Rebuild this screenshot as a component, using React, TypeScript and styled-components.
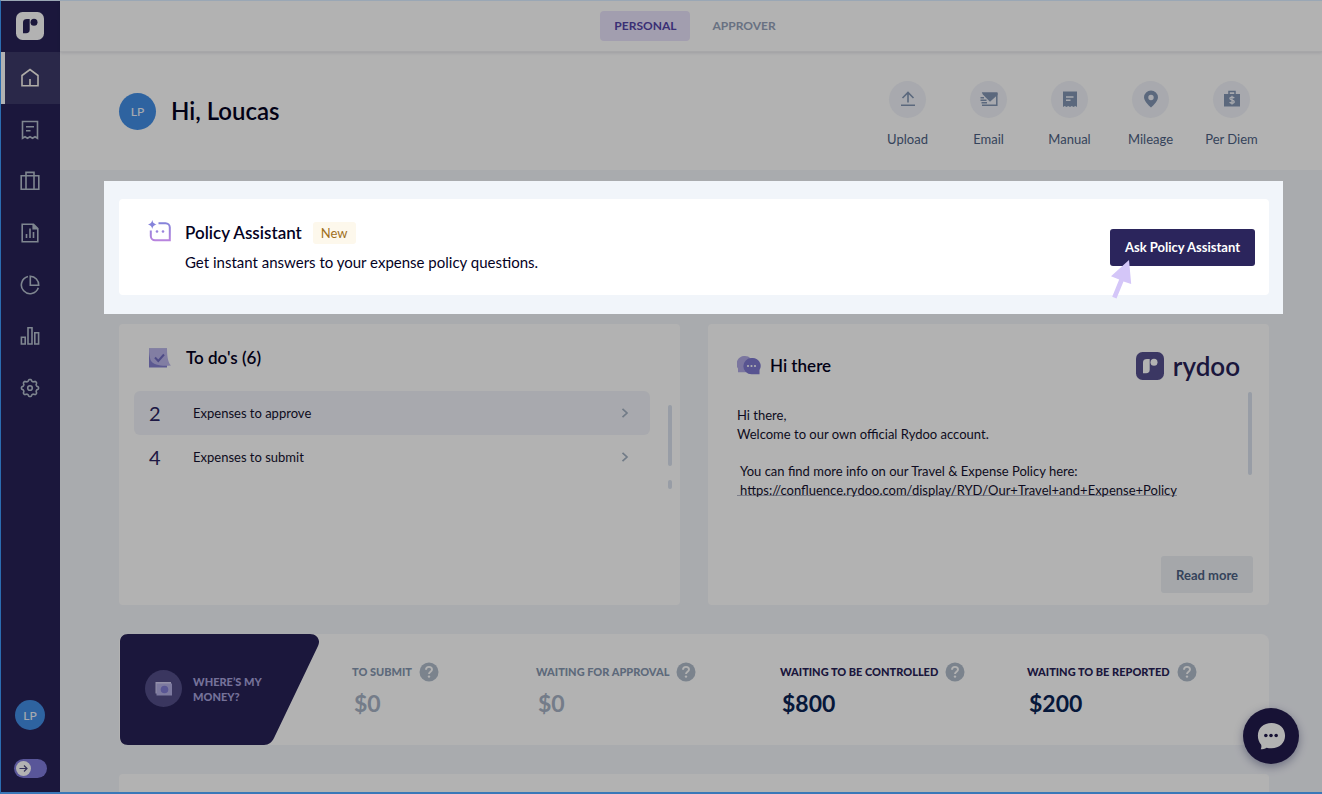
import React from "react";
import styled, { createGlobalStyle } from "styled-components";

const GlobalStyle = createGlobalStyle`
  *, *::before, *::after { box-sizing: border-box; }
  body { margin: 0; font-family: Lato, "Liberation Sans", sans-serif; color: #04021f; background: #f3f5fa; }
  h1, h2, p, ul, dl, dd { margin: 0; padding: 0; }
  ul { list-style: none; }
  button { font-family: inherit; border: 0; cursor: pointer; }
  a { color: inherit; text-decoration: none; }
  svg { display: block; flex: none; }
`;

const Shell = styled.div`
  position: relative;
  isolation: isolate;
  display: flex;
  height: 100vh;
  overflow: hidden;
`;

const WindowFrame = styled.div`
  position: fixed;
  inset: 0;
  z-index: 10;
  border-left: 1px solid #2b6cb0;
  border-bottom: 2px solid #3a78b8;
  border-top: 1px solid #9aa7b5;
  pointer-events: none;
`;

/* Sidebar */

const Sidebar = styled.aside`
  display: flex;
  flex-direction: column;
  align-items: center;
  flex: none;
  width: 60px;
  padding-bottom: 16px;
  background: #272256;
`;

const Brand = styled.a`
  display: grid;
  place-items: center;
  height: 52px;
`;

const NavList = styled.ul`
  display: flex;
  flex-direction: column;
  width: 100%;
  height: 362px;
`;

const NavItem = styled.li`
  flex: 1;
`;

const NavLink = styled.a<{ $active?: boolean }>`
  display: grid;
  place-items: center;
  height: 100%;
  border-left: 5px solid ${(p) => (p.$active ? "#fff" : "transparent")};
  padding-right: 5px;
  color: ${(p) => (p.$active ? "#fbf6f0" : "#b6c0ce")};
  background: ${(p) => (p.$active ? "#3d3a69" : "transparent")};
`;

const Avatar = styled.span<{ $size: number }>`
  display: grid;
  place-items: center;
  flex: none;
  width: ${(p) => p.$size}px;
  height: ${(p) => p.$size}px;
  border-radius: 50%;
  background: #428ee6;
  color: #eef4fc;
  font-size: 12px;
  font-weight: 500;
`;

const SidebarFoot = styled.div`
  display: flex;
  flex-direction: column;
  align-items: center;
  gap: 29px;
  margin-top: auto;
`;

const ExpandToggle = styled.button`
  display: flex;
  align-items: center;
  width: 33px;
  height: 19px;
  padding: 0 2px;
  border-radius: 10px;
  background: #807bdc;
`;

/* Page */

const Page = styled.div`
  flex: 1;
  min-width: 0;
`;

const TopBar = styled.header`
  display: flex;
  justify-content: center;
  align-items: center;
  gap: 8px;
  height: 52px;
  padding-left: 8px;
  background: #fff;
  border-bottom: 1px solid #f0f0f2;
  box-shadow: 0 1px 3px rgba(20, 20, 60, 0.12);
  position: relative;
`;

const Tab = styled.button<{ $active?: boolean }>`
  height: 30px;
  padding: 0 14px;
  border-radius: 4px;
  font-size: 12px;
  font-weight: 700;
  color: ${(p) => (p.$active ? "#5344a8" : "#96a3ba")};
  background: ${(p) => (p.$active ? "#e9e3fb" : "transparent")};
`;

const Hero = styled.section`
  display: flex;
  justify-content: space-between;
  align-items: center;
  height: 118px;
  padding: 0 50px 0 59px;
  background: #fff;
`;

const Greeting = styled.div`
  display: flex;
  align-items: center;
  gap: 15px;
`;

const Hello = styled.h1`
  font-size: 24px;
  line-height: 30px;
  font-weight: 600;
`;

const Actions = styled.ul`
  display: flex;
  padding-top: 6px;
`;

const Action = styled.button`
  display: flex;
  flex-direction: column;
  align-items: center;
  gap: 12px;
  width: 81px;
  padding: 0;
  background: none;
  color: #4d6183;
  font-size: 13px;
  line-height: 18px;
`;

const ActionIcon = styled.span`
  display: grid;
  place-items: center;
  width: 37px;
  height: 37px;
  border-radius: 50%;
  background: #f1f3f9;
  color: #8396b4;
`;

const Content = styled.main`
  display: flex;
  flex-direction: column;
  padding: 11px 53px 0 59px;
`;

const Card = styled.section`
  background: #fff;
  border-radius: 4px;
`;

/* The highlighted step of the tour; its shadow dims everything around it. */
const Spotlight = styled.div`
  position: relative;
  z-index: 5;
  margin: 0 -14px 10px -15px;
  padding: 18px 14px 19px 15px;
  background: #f1f5fa;
  box-shadow: 0 0 0 9999px rgba(0, 0, 0, 0.3);
`;

const PolicyCard = styled(Card)`
  display: flex;
  align-items: center;
  gap: 13px;
  height: 96px;
  padding: 0 14px 0 29px;
`;

const PolicyIcon = styled.span`
  align-self: flex-start;
  padding-top: 21px;
`;

const PolicyText = styled.div`
  display: flex;
  flex-direction: column;
  gap: 5px;
  flex: 1;
  font-size: 15px;
  line-height: 24px;
`;

const PolicyHead = styled.div`
  display: flex;
  align-items: center;
  gap: 11px;
`;

const Title = styled.h2`
  font-size: 17px;
  line-height: 24px;
  font-weight: 600;
`;

const Badge = styled.span`
  padding: 0 8px;
  border-radius: 3px;
  background: #fdf8ec;
  color: #a0701c;
  font-size: 13px;
  line-height: 22px;
`;

const PrimaryButton = styled.button`
  height: 37px;
  padding: 0 15px;
  border-radius: 3px;
  background: #2b255c;
  color: #fff;
  font-size: 13px;
  font-weight: 700;
`;

const Pointer = styled.svg`
  position: absolute;
  right: 150px;
  top: 79px;
`;

const Columns = styled.div`
  display: grid;
  grid-template-columns: 1fr 1fr;
  gap: 28px;
`;

const Panel = styled(Card)`
  display: flex;
  flex-direction: column;
  min-height: 281px;
`;

const TodoHead = styled.div`
  display: flex;
  align-items: center;
  gap: 15px;
  height: 67px;
  padding-left: 30px;
`;

const TodoBody = styled.div`
  display: flex;
  gap: 18px;
  padding: 0 8px 0 15px;
`;

const TodoList = styled.ul`
  flex: 1;
`;

const TodoRow = styled.a<{ $selected?: boolean }>`
  display: flex;
  align-items: center;
  height: 44px;
  padding: 0 20px 0 15px;
  border-radius: 6px;
  background: ${(p) => (p.$selected ? "#f1f3f9" : "transparent")};
  font-size: 13px;
  color: #14112e;
`;

const TodoCount = styled.span`
  width: 44px;
  font-size: 20px;
  color: #2b2462;
`;

const TodoLabel = styled.span`
  flex: 1;
`;

const ScrollTrack = styled.div`
  display: flex;
  flex-direction: column;
  gap: 14px;
  padding-top: 14px;
`;

const ScrollThumb = styled.span<{ $length: number }>`
  width: 4px;
  height: ${(p) => p.$length}px;
  border-radius: 2px;
  background: #dae1ee;
`;

const NewsHead = styled.div`
  display: flex;
  align-items: center;
  gap: 9px;
  padding: 28px 29px 12px;
`;

const Logo = styled.div`
  display: flex;
  align-items: center;
  gap: 9px;
  margin-left: auto;
`;

const Wordmark = styled.span`
  color: #272256;
  font-size: 26px;
  line-height: 28px;
  font-weight: 600;
`;

const NewsBody = styled.div`
  display: flex;
  justify-content: space-between;
  flex: 1;
  padding: 0 17px 0 29px;
`;

const NewsText = styled.div`
  display: flex;
  flex-direction: column;
  gap: 18px;
  padding-top: 14px;
  font-size: 13px;
  line-height: 19px;
  color: #14112e;
`;

const Indented = styled.span`
  display: block;
  padding-left: 3px;
`;

const NewsLink = styled.a`
  display: block;
  height: 15px;
  padding-left: 3px;
  border-bottom: 1px solid #b4b6c6;
  line-height: 18px;
`;

const NewsScroll = styled(ScrollTrack)`
  padding-top: 0;
`;

const NewsFoot = styled.div`
  display: flex;
  justify-content: flex-end;
  padding: 0 16px 12px;
`;

const SecondaryButton = styled.button`
  height: 37px;
  padding: 0 15px;
  border-radius: 3px;
  background: #ecf0f4;
  color: #4d6183;
  font-size: 13px;
  font-weight: 700;
`;

const MoneyCard = styled(Card)`
  display: flex;
  align-items: center;
  height: 111px;
  margin: 29px 0;
  border-radius: 8px;
`;

const MoneyLead = styled.div`
  position: relative;
  z-index: 0;
  display: flex;
  align-items: center;
  gap: 11px;
  flex: none;
  width: 200px;
  height: 111px;
  padding: 0 0 2px 26px;
  color: #a8a2dc;
  font-size: 11px;
  line-height: 15px;
  font-weight: 900;
`;

const MoneyShape = styled.svg`
  position: absolute;
  left: 0;
  top: 0;
  z-index: -1;
`;

const Stats = styled.dl`
  display: grid;
  grid-template-columns: 184fr 244fr 247fr 229fr;
  flex: 1;
  padding: 0 13px 0 33px;
`;

const Stat = styled.div<{ $muted?: boolean }>`
  color: ${(p) => (p.$muted ? "#8697b0" : "#272256")};
`;

const StatLabel = styled.dt`
  display: flex;
  align-items: center;
  gap: 7px;
  font-size: 11px;
  line-height: 20px;
  font-weight: 900;
  white-space: nowrap;
`;

const StatValue = styled.dd<{ $muted?: boolean }>`
  padding: 7px 0 0 2px;
  font-size: 23px;
  line-height: 28px;
  font-weight: 700;
  color: ${(p) => (p.$muted ? "#a6b2c4" : "#0a2354")};
`;

const LowerCard = styled(Card)`
  height: 120px;
`;

const ChatButton = styled.button`
  position: fixed;
  right: 23px;
  bottom: 30px;
  z-index: 2;
  display: grid;
  place-items: center;
  width: 56px;
  height: 56px;
  padding: 0;
  border-radius: 50%;
  background: #221b4c;
  box-shadow: 0 3px 10px rgba(30, 35, 90, 0.4);
`;

const RydooMark = ({ bg, fg }: { bg: string; fg: string }) => (
  <svg width="28" height="28" viewBox="0 0 28 28" aria-hidden="true">
    <rect width="28" height="28" rx="6.5" fill={bg} />
    <path d="M7 10.500C7 8 8.500 7 11 7H13.700V17.500C13.700 20 12.500 21.300 10 21.300H7Z" fill={fg} />
    <circle cx="18" cy="10.300" r="3.500" fill={fg} />
  </svg>
);

const line = { fill: "none", stroke: "currentColor", strokeWidth: 1.6 } as const;

/* Outline of a cog with eight rounded teeth, centred on (10, 10). */
const cogOutline =
  Array.from({ length: 96 }, (_, i) => {
    const angle = (i / 96) * Math.PI * 2;
    const wave = Math.tanh(1.6 * Math.cos(8 * angle));
    const radius = 7.7 + 0.9 * wave;
    const x = 10 + radius * Math.cos(angle);
    const y = 10 + radius * Math.sin(angle);
    return `${i === 0 ? "M" : "L"}${x.toFixed(2)} ${y.toFixed(2)}`;
  }).join("") + "Z";

const navItems = [
  {
    label: "Home",
    icon: (
      <g {...line}>
        <path d="M2 7.500L10 1.500L18 7.500V17.700H2Z" />
        <path d="M10 17.500V11" />
      </g>
    ),
  },
  {
    label: "Expenses",
    icon: (
      <g {...line}>
        <path d="M2.500 1.500H17.500V18.300L15 16.800L12.500 18.300L10 16.800L7.500 18.300L5 16.800L2.500 18.300Z" />
        <path d="M6 6.800H14M6 10.800H10.500" />
      </g>
    ),
  },
  {
    label: "Travel",
    icon: (
      <g {...line}>
        <path d="M1.200 4.800H18.800V18.200H1.200Z" />
        <path d="M6 18V1.400H14V18" />
      </g>
    ),
  },
  {
    label: "Reports",
    icon: (
      <g {...line}>
        <path d="M2.200 1.200H13.500L17.800 5.500V18.800H2.200Z" />
        <path d="M13.200 1.500V5.800H17.500" fill="currentColor" />
        <path d="M6.500 15V11M10 15V5.500M13.500 15V9" />
      </g>
    ),
  },
  {
    label: "Insights",
    icon: (
      <g {...line}>
        <path d="M8 1.500A8.700 8.700 0 1 0 18.300 12.800" />
        <path d="M10.300 1.200V10.200H18.700A8.700 8.700 0 0 0 10.300 1.200Z" />
      </g>
    ),
  },
  {
    label: "Statistics",
    icon: (
      <g {...line}>
        <path d="M1.400 11.200H5.200V18H1.400ZM8 1.800H12V18H8ZM14.800 6.800H18.600V18H14.800Z" />
      </g>
    ),
  },
  {
    label: "Settings",
    icon: (
      <g {...line} strokeLinejoin="round">
        <circle cx="10" cy="10" r="2.300" />
        <path d={cogOutline} />
      </g>
    ),
  },
];

const actions = [
  {
    label: "Upload",
    icon: <path d="M9 12.500V2.500M3.500 8L9 2.500L14.500 8M2 15.200H16" {...line} />,
  },
  {
    label: "Email",
    icon: (
      <g>
        <path d="M1.800 2.200H17.500V5L10 11.800L2.800 4.500Z" fill="currentColor" />
        <path d="M16.800 3V15.300H2M0.500 7.700H4M0.500 10.300H6.500M1.500 12.800H7" {...line} strokeWidth={1.500} />
      </g>
    ),
  },
  {
    label: "Manual",
    icon: (
      <g>
        <path d="M2 1.500H16V17L14.300 16L12.500 17L10.800 16L9 17L7.200 16L5.500 17L3.700 16L2 17Z" fill="currentColor" />
        <path d="M5 7H12.500M5 10.200H9.500" stroke="#f1f3f9" strokeWidth="1.400" />
      </g>
    ),
  },
  {
    label: "Mileage",
    icon: (
      <path
        d="M9 0.500A7 7 0 0 0 2 7.300C2 12 9 17.500 9 17.500S16 12 16 7.300A7 7 0 0 0 9 0.500ZM9 10.200A2.700 2.700 0 1 1 9 4.800A2.700 2.700 0 0 1 9 10.200Z"
        fill="currentColor"
        fillRule="evenodd"
      />
    ),
  },
  {
    label: "Per Diem",
    icon: (
      <g>
        <path d="M1 4H17V16.500H1Z" fill="currentColor" />
        <path d="M6 4V1.500H12V4" {...line} strokeWidth={1.500} />
        <path
          d="M11.200 8.100C10.800 7.300 10 7.100 9 7.100C7.700 7.100 6.900 7.700 6.900 8.500C6.900 10.700 11.200 9.400 11.200 11.700C11.200 12.600 10.300 13.200 9 13.200C7.900 13.200 7.100 12.900 6.700 12.100M9 5.800V14.500"
          fill="none"
          stroke="#f1f3f9"
          strokeWidth="1.300"
        />
      </g>
    ),
  },
];

const todos = [
  { count: 2, label: "Expenses to approve", selected: true },
  { count: 4, label: "Expenses to submit", selected: false },
];

const stats = [
  { label: "TO SUBMIT", value: "$0", muted: true },
  { label: "WAITING FOR APPROVAL", value: "$0", muted: true },
  { label: "WAITING TO BE CONTROLLED", value: "$800", muted: false },
  { label: "WAITING TO BE REPORTED", value: "$200", muted: false },
];

const HelpIcon = () => (
  <svg width="20" height="20" viewBox="0 0 20 20" aria-hidden="true">
    <circle cx="10" cy="10" r="9.500" fill="#b0bccb" />
    <path d="M7 7.800C7 5.900 8.300 4.900 10 4.900S13 6 13 7.500C13 9.700 10 9.700 10 12" fill="none" stroke="#fff" strokeWidth="1.900" />
    <circle cx="10" cy="14.600" r="1.200" fill="#fff" />
  </svg>
);

export default function App() {
  return (
    <Shell>
      <GlobalStyle />
      <Sidebar>
        <Brand href="#" aria-label="Rydoo">
          <RydooMark bg="#fff" fg="#272256" />
        </Brand>
        <NavList>
          {navItems.map((item, i) => (
            <NavItem key={item.label}>
              <NavLink href="#" $active={i === 0} aria-label={item.label}>
                <svg width="20" height="20" viewBox="0 0 20 20" aria-hidden="true">
                  {item.icon}
                </svg>
              </NavLink>
            </NavItem>
          ))}
        </NavList>
        <SidebarFoot>
          <Avatar $size={30}>LP</Avatar>
          <ExpandToggle aria-label="Expand menu">
            <svg width="15" height="15" viewBox="0 0 15 15" aria-hidden="true">
              <circle cx="7.500" cy="7.500" r="7.500" fill="#fff" />
              <path d="M3.500 7.500H11M8 4.500L11 7.500L8 10.500" fill="none" stroke="#4a4680" strokeWidth="1.200" />
            </svg>
          </ExpandToggle>
        </SidebarFoot>
      </Sidebar>

      <Page>
        <TopBar>
          <Tab $active>PERSONAL</Tab>
          <Tab>APPROVER</Tab>
        </TopBar>
        <Hero>
          <Greeting>
            <Avatar $size={37}>LP</Avatar>
            <Hello>Hi, Loucas</Hello>
          </Greeting>
          <Actions>
            {actions.map((action) => (
              <li key={action.label}>
                <Action>
                  <ActionIcon>
                    <svg width="18" height="18" viewBox="0 0 18 18" aria-hidden="true">
                      {action.icon}
                    </svg>
                  </ActionIcon>
                  {action.label}
                </Action>
              </li>
            ))}
          </Actions>
        </Hero>

        <Content>
          <Spotlight>
            <PolicyCard>
              <PolicyIcon>
                <svg width="24" height="24" viewBox="0 0 24 24" aria-hidden="true">
                  <defs>
                    <linearGradient id="assistant" x1="0" y1="0" x2="0" y2="1">
                      <stop offset="0" stopColor="#8583da" />
                      <stop offset="1" stopColor="#b884de" />
                    </linearGradient>
                  </defs>
                  <path d="M10.500 3.200H17.500A4.300 4.300 0 0 1 21.800 7.500V20.200H7A4.300 4.300 0 0 1 2.800 16V10.500" fill="none" stroke="url(#assistant)" strokeWidth="2" />
                  <path d="M4.300 0C5 2.800 5.700 3.500 8.700 4.500C5.700 5.500 5 6.200 4.300 9C3.600 6.200 2.800 5.500 0 4.500C2.800 3.500 3.600 2.800 4.300 0Z" fill="#8583da" />
                  <circle cx="9" cy="11.500" r="1.300" fill="#9a84dc" />
                  <circle cx="15" cy="11.500" r="1.300" fill="#9a84dc" />
                </svg>
              </PolicyIcon>
              <PolicyText>
                <PolicyHead>
                  <Title>Policy Assistant</Title>
                  <Badge>New</Badge>
                </PolicyHead>
                <p>Get instant answers to your expense policy questions.</p>
              </PolicyText>
              <PrimaryButton>Ask Policy Assistant</PrimaryButton>
            </PolicyCard>
            <Pointer width="24" height="40" viewBox="0 0 24 40" aria-hidden="true">
              <path d="M20 0L22.200 24L14.500 21.400L7.500 38.500L3.200 36.800L10.200 19.500L2 16.200Z" fill="#d4c6f8" />
            </Pointer>
          </Spotlight>

          <Columns>
            <Panel>
              <TodoHead>
                <svg width="22" height="20" viewBox="0 0 22 20" aria-hidden="true">
                  <path d="M0 0.500H18V19.500H0Z" fill="#8480d0" />
                  <path d="M0 0.500H18C18 10 19.500 15 22 17.500C14 18.500 4 17.500 1.500 12C0.500 8 0 5 0 0.500Z" fill="#bab5ea" />
                  <path d="M6 9.500L9.300 13L15 6.500" fill="none" stroke="#706cc0" strokeWidth="2" />
                </svg>
                <Title>To do's (6)</Title>
              </TodoHead>
              <TodoBody>
                <TodoList>
                  {todos.map((todo) => (
                    <li key={todo.label}>
                      <TodoRow href="#" $selected={todo.selected}>
                        <TodoCount>{todo.count}</TodoCount>
                        <TodoLabel>{todo.label}</TodoLabel>
                        <svg width="10" height="12" viewBox="0 0 10 12" aria-hidden="true">
                          <path d="M2.500 1.800L7 6L2.500 10.200" fill="none" stroke="#a2b0c2" strokeWidth="1.700" />
                        </svg>
                      </TodoRow>
                    </li>
                  ))}
                </TodoList>
                <ScrollTrack>
                  <ScrollThumb $length={61} />
                  <ScrollThumb $length={9} />
                </ScrollTrack>
              </TodoBody>
            </Panel>

            <Panel>
              <NewsHead>
                <svg width="24" height="20" viewBox="0 0 24 20" aria-hidden="true">
                  <path d="M8 0A8 8 0 0 1 8 16.300H1V12.500A8 8 0 0 1 8 0Z" fill="#b0aae4" />
                  <path d="M14.500 2A8 8 0 1 0 14.500 18.300H22.500V14A8 8 0 0 0 14.500 2Z" fill="#7e79d0" />
                  <circle cx="11" cy="10" r="1.100" fill="#fff" />
                  <circle cx="14.500" cy="10" r="1.100" fill="#fff" />
                  <circle cx="18" cy="10" r="1.100" fill="#fff" />
                </svg>
                <Title>Hi there</Title>
                <Logo>
                  <RydooMark bg="#554f8e" fg="#fff" />
                  <Wordmark>rydoo</Wordmark>
                </Logo>
              </NewsHead>
              <NewsBody>
                <NewsText>
                  <p>
                    Hi there,
                    <br />
                    Welcome to our own official Rydoo account.
                  </p>
                  <div>
                    <Indented>You can find more info on our Travel &amp; Expense Policy here:</Indented>
                    <NewsLink href="https://confluence.rydoo.com/display/RYD/Our+Travel+and+Expense+Policy">
                      https://confluence.rydoo.com/display/RYD/Our+Travel+and+Expense+Policy
                    </NewsLink>
                  </div>
                </NewsText>
                <NewsScroll>
                  <ScrollThumb $length={83} />
                </NewsScroll>
              </NewsBody>
              <NewsFoot>
                <SecondaryButton>Read more</SecondaryButton>
              </NewsFoot>
            </Panel>
          </Columns>

          <MoneyCard>
            <MoneyLead>
              <MoneyShape width="200" height="111" viewBox="0 0 200 111" aria-hidden="true">
                <path d="M9 0H191C198 0 202 6 199 12L155 104C153 108 150 111 145 111H9C4 111 1 108 1 103V8C1 3 4 0 9 0Z" fill="#272256" />
              </MoneyShape>
              <svg width="37" height="37" viewBox="0 0 37 37" aria-hidden="true">
                <circle cx="18.500" cy="18.500" r="18.500" fill="#534e88" />
                <path d="M10.500 12H26V23.500H10.500Z" fill="#d4d0f2" />
                <path d="M11.500 13.500H27V25.500H11.500Z" fill="#b4afe4" />
                <circle cx="19.500" cy="19.500" r="3.800" fill="#807bd4" />
              </svg>
              <span>
                WHERE’S MY
                <br />
                MONEY?
              </span>
            </MoneyLead>
            <Stats>
              {stats.map((stat) => (
                <Stat key={stat.label} $muted={stat.muted}>
                  <StatLabel>
                    {stat.label}
                    <HelpIcon />
                  </StatLabel>
                  <StatValue $muted={stat.muted}>{stat.value}</StatValue>
                </Stat>
              ))}
            </Stats>
          </MoneyCard>

          <LowerCard />
        </Content>
      </Page>

      <ChatButton aria-label="Open chat">
        <svg width="30" height="30" viewBox="0 0 32 32" aria-hidden="true">
          <path d="M16.500 2C25 2 31 7.500 31 15.500S25 29 16.500 29C14.500 29 12.800 28.800 11.300 28.400C9.500 29.600 7 30 5 30C5.800 28.500 6 26.800 5.500 25.200C3.200 22.800 2 19.500 2 15.500C2 7.500 8 2 16.500 2Z" fill="#fff" />
          <circle cx="10.500" cy="15.500" r="1.900" fill="#221b4c" />
          <circle cx="16" cy="15.500" r="1.900" fill="#221b4c" />
          <circle cx="21.500" cy="15.500" r="1.900" fill="#221b4c" />
        </svg>
      </ChatButton>
      <WindowFrame />
    </Shell>
  );
}
